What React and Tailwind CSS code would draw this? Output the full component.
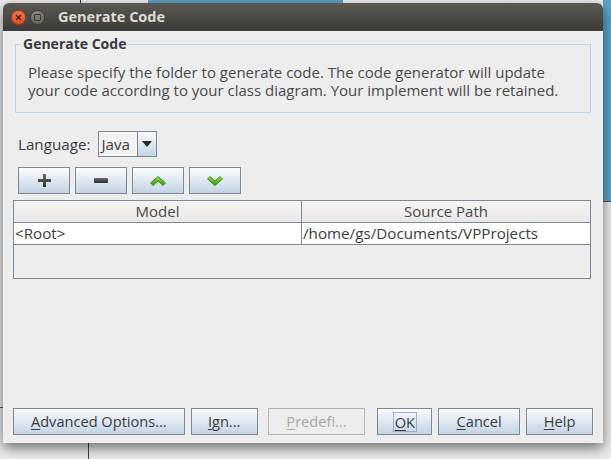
import React from "react";

const F = { fontFamily: '"Open Sans", "Noto Sans", sans-serif' };

function U({ children }) {
  return <span className="underline underline-offset-2">{children}</span>;
}

function Btn({ children, className = "", disabled = false }) {
  return (
    <div
      className={
        "flex items-center justify-center h-[27px] text-[14.6px] " +
        (disabled
          ? "border border-[#b5b5b5] bg-[#ededed] text-[#a8a8a8] "
          : "border border-[#7a8a99] bg-gradient-to-b from-[#fbfcfd] to-[#c3d3e4] text-[#3c3c3c] ") +
        className
      }
    >
      {children}
    </div>
  );
}

function ToolBtn({ children }) {
  return (
    <div className="flex items-center justify-center w-[52px] h-[27px] border border-[#7a8a99] bg-gradient-to-b from-[#fbfcfd] to-[#c3d3e4]">
      {children}
    </div>
  );
}

export default function App() {
  return (
    <div className="relative w-[611px] h-[459px] overflow-hidden bg-[#dcdcdc]" style={F}>
      {/* desktop background fragments */}
      <div className="absolute left-0 top-0 w-[611px] h-[459px] bg-[#ededed]" />
      <div className="absolute left-[148px] top-0 w-[195px] h-[4px] bg-[#5da0c6]" />
      <div className="absolute left-[80px] top-0 w-[1px] h-[4px] bg-[#333]" />
      <div className="absolute left-[603px] top-0 w-[8px] h-[201px] bg-[#5ea3c8]" />
      <div className="absolute left-[603px] top-[201px] w-[8px] h-[1px] bg-[#555]" />
      <div className="absolute left-[88px] top-[443px] w-[1px] h-[16px] bg-[#444]" />
      <div className="absolute left-0 top-[407px] w-[3px] h-[1px] bg-[#555]" />

      {/* window */}
      <div className="absolute left-[3px] top-[3px] w-[600px] h-[440px] flex flex-col bg-[#ededed] rounded-t-[6px] shadow-[0_5px_14px_rgba(0,0,0,0.55)]">
        {/* title bar */}
        <div className="h-[28px] flex items-center rounded-t-[6px] bg-gradient-to-b from-[#5c5952] to-[#3c3b37] pl-[8px]">
          <div className="w-[15px] h-[15px] rounded-full bg-gradient-to-b from-[#f37a4f] to-[#de4d1f] border border-[#a8391a] flex items-center justify-center">
            <svg width="7" height="7" viewBox="0 0 7 7">
              <path d="M1 1L6 6M6 1L1 6" stroke="#4a1a0a" strokeWidth="1.3" />
            </svg>
          </div>
          <div className="ml-[4px] w-[15px] h-[15px] rounded-full bg-gradient-to-b from-[#8a8780] to-[#6b6862] border border-[#3f3d39] flex items-center justify-center">
            <div className="w-[7px] h-[7px] border border-[#3a3834] rounded-[1px]" />
          </div>
          <div className="ml-[13px] text-[14.5px] font-bold text-[#dfdbd2] leading-none">Generate Code</div>
        </div>

        {/* body */}
        <div className="flex-1 flex flex-col px-[10px]">
          {/* group box */}
          <div className="relative mt-[13px] ml-[2px] w-[576px] h-[69px] border border-[#b9d4ec]">
            <div className="absolute left-[5px] top-[-10px] px-[2px] bg-[#ededed] text-[14px] font-bold text-[#3a3a3a] leading-[18px]">
              Generate Code
            </div>
            <div className="pl-[12px] pt-[18px] text-[15px] leading-[18px] text-[#4a4a4a]">
              <div>Please specify the folder to generate code. The code generator will update</div>
              <div>your code according to your class diagram. Your implement will be retained.</div>
            </div>
          </div>

          {/* language */}
          <div className="flex items-center mt-[18px] ml-[5px]">
            <span className="text-[15.2px] text-[#3c3c3c]">Language:</span>
            <div className="ml-[8px] flex h-[26px] border border-[#7a8a99]">
              <div className="w-[39px] bg-[#f2f2f2] flex items-center pl-[2px] text-[15.2px] text-[#3c3c3c] border-r border-[#7a8a99]">
                Java
              </div>
              <div className="w-[18px] flex items-center justify-center bg-gradient-to-b from-[#fbfcfd] to-[#c3d3e4]">
                <svg width="10" height="6" viewBox="0 0 10 6">
                  <path d="M0 0H10L5 6Z" fill="#2a2a2a" />
                </svg>
              </div>
            </div>
          </div>

          {/* tool buttons */}
          <div className="flex gap-[5px] mt-[10px] ml-[5px]">
            <ToolBtn>
              <svg width="13" height="13" viewBox="0 0 13 13">
                <defs>
                  <linearGradient id="gp" x1="0" y1="0" x2="0" y2="1">
                    <stop offset="0" stopColor="#6a6a6a" />
                    <stop offset="1" stopColor="#2e2e2e" />
                  </linearGradient>
                </defs>
                <path d="M5 0H8V5H13V8H8V13H5V8H0V5H5Z" fill="url(#gp)" />
              </svg>
            </ToolBtn>
            <ToolBtn>
              <svg width="14" height="5" viewBox="0 0 14 5">
                <rect x="0" y="0" width="14" height="5" rx="1" fill="url(#gp)" />
              </svg>
            </ToolBtn>
            <ToolBtn>
              <svg width="16" height="10" viewBox="0 0 16 10">
                <defs>
                  <linearGradient id="gg" x1="0" y1="0" x2="0" y2="1">
                    <stop offset="0" stopColor="#8fe04a" />
                    <stop offset="1" stopColor="#2f9e10" />
                  </linearGradient>
                </defs>
                <path d="M8 0.5L15.5 7L13 9.5L8 5L3 9.5L0.5 7Z" fill="url(#gg)" stroke="#2a7a0c" strokeWidth="0.8" />
              </svg>
            </ToolBtn>
            <ToolBtn>
              <svg width="16" height="10" viewBox="0 0 16 10">
                <path d="M8 9.5L15.5 3L13 0.5L8 5L3 0.5L0.5 3Z" fill="url(#gg)" stroke="#2a7a0c" strokeWidth="0.8" />
              </svg>
            </ToolBtn>
          </div>

          {/* table */}
          <div className="mt-[6px] w-[578px] h-[79px] border border-[#7a8a99] bg-[#ededed] flex flex-col">
            <div className="flex h-[22px] border-b border-[#7a8a99] bg-gradient-to-b from-[#f4f4f4] to-[#e8e8e8] text-[15px] text-[#4a4a4a]">
              <div className="w-[288px] border-r border-[#7a8a99] flex items-center justify-center">Model</div>
              <div className="flex-1 flex items-center justify-center">Source Path</div>
            </div>
            <div className="flex h-[22px] border-b border-[#7a8a99] bg-white text-[15.2px] text-[#3c3c3c]">
              <div className="w-[288px] border-r border-[#7a8a99] flex items-center pl-[1px]">&lt;Root&gt;</div>
              <div className="flex-1 flex items-center pl-[1px]">/home/gs/Documents/VPProjects</div>
            </div>
          </div>

          <div className="flex-1" />

          {/* bottom buttons */}
          <div className="flex items-center mb-[8px]">
            <Btn className="w-[172px]"><U>A</U>dvanced Options...</Btn>
            <Btn className="w-[67px] ml-[6px]"><U>I</U>gn...</Btn>
            <Btn disabled className="w-[98px] ml-[10px]"><U>P</U>redefi...</Btn>
            <Btn className="w-[55px] ml-[12px]">
              <span className="border border-[#9ab0c8] px-[1px] leading-[18px]"><U>O</U>K</span>
            </Btn>
            <Btn className="w-[82px] ml-[6px]"><U>C</U>ancel</Btn>
            <Btn className="w-[67px] ml-[6px]"><U>H</U>elp</Btn>
          </div>
        </div>
      </div>
    </div>
  );
}
